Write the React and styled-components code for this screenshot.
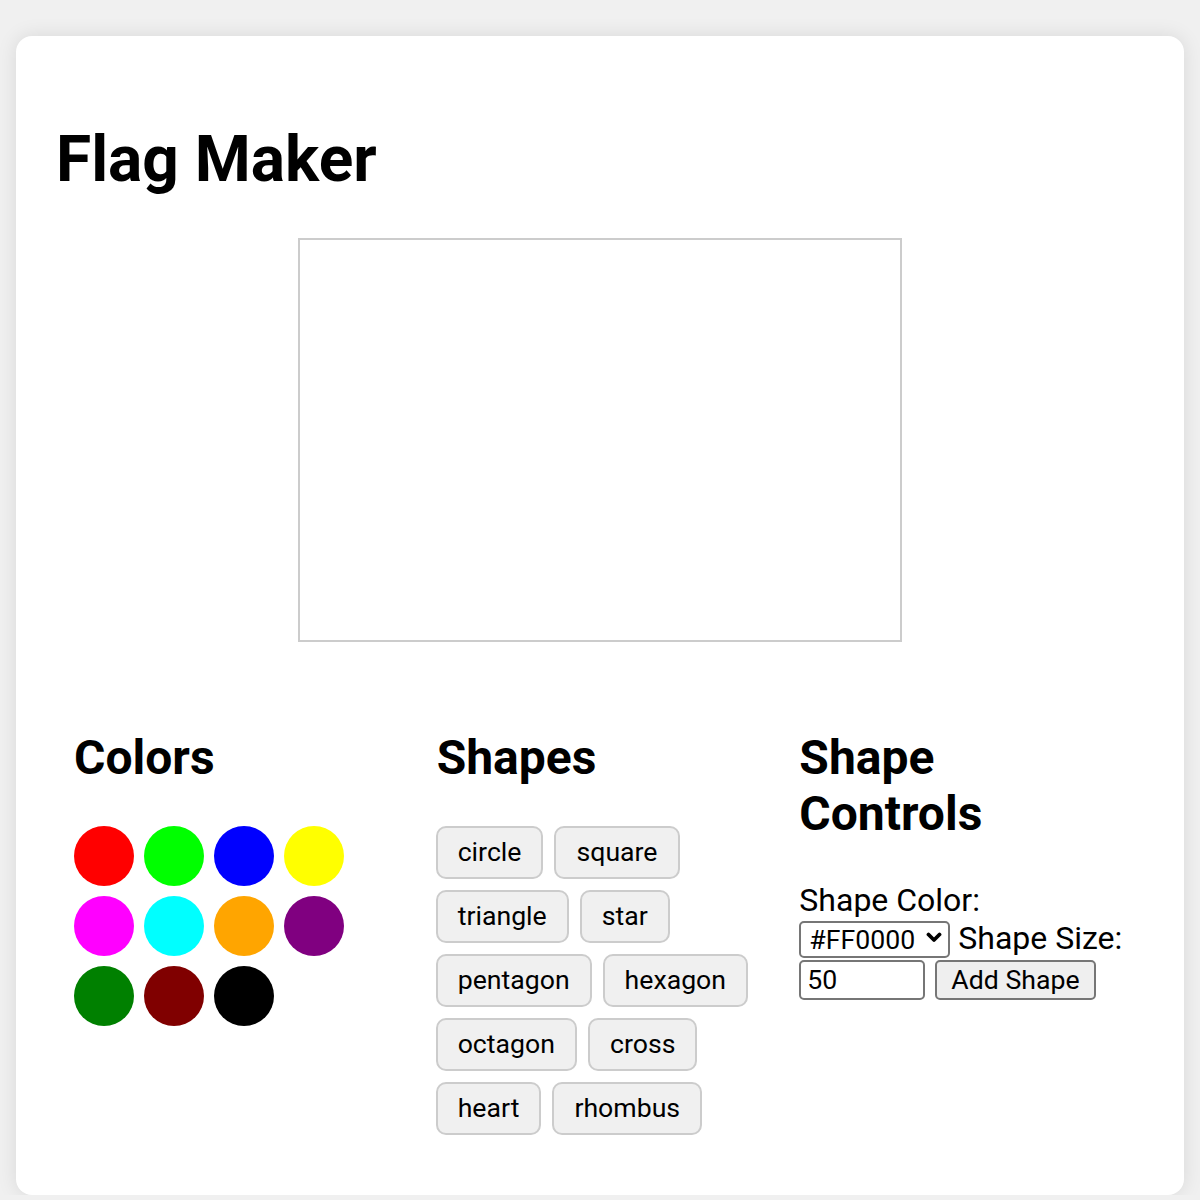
import React, { useState } from 'react';
import styled, { createGlobalStyle } from 'styled-components';

const COLORS = [
  '#FF0000', '#00FF00', '#0000FF', '#FFFF00',
  '#FF00FF', '#00FFFF', '#FFA500', '#800080',
  '#008000', '#800000', '#000000',
];

const SHAPES = [
  'circle', 'square', 'triangle', 'star', 'pentagon',
  'hexagon', 'octagon', 'cross', 'heart', 'rhombus',
];

const GlobalStyle = createGlobalStyle`
  body {
    margin: 0;
    background: #f0f0f0;
    font-family: Roboto, "Liberation Sans", sans-serif;
    color: #000;
  }
`;

const Page = styled.div`
  padding: 36px 16px 0;
`;

const Card = styled.div`
  background: #fff;
  border-radius: 16px;
  box-shadow: 0 0 20px rgba(0, 0, 0, 0.1);
  padding: 40px;
`;

const Title = styled.h1`
  font-size: 64px;
  font-weight: 700;
  margin: 46px 0 41px;
`;

const Canvas = styled.div`
  width: 600px;
  height: 400px;
  margin: 0 auto;
  border: 2px solid #ccc;
  background: #fff;
`;

const Controls = styled.div`
  display: flex;
  margin-top: 28px;
`;

const Column = styled.div`
  flex: 1;
  min-width: 0;
  padding: 20px 18px;
`;

const Heading = styled.h2`
  font-size: 48px;
  font-weight: 700;
  line-height: 56px;
  margin: 40px 0;
`;

const Swatches = styled.div`
  display: flex;
  flex-wrap: wrap;
  gap: 10px;
`;

const Swatch = styled.div`
  width: 60px;
  height: 60px;
  border-radius: 50%;
  background: ${(p) => p.$color};
  cursor: pointer;
`;

const ShapeList = styled.div`
  display: flex;
  flex-wrap: wrap;
  gap: 11px;
  margin-left: -1px;
`;

const ShapeButton = styled.button`
  font-family: Roboto, "Liberation Sans", sans-serif;
  font-size: 26.67px;
  line-height: 31px;
  padding: 9px 20px;
  border: 2px solid #ccc;
  border-radius: 10px;
  background: #f0f0f0;
  color: #000;
  cursor: pointer;
`;

const Form = styled.div`
  font-size: 32px;
  line-height: 37.5px;
`;

const SelectWrap = styled.span`
  position: relative;
  display: inline-block;
  vertical-align: baseline;
`;

const Select = styled.select`
  appearance: none;
  -webkit-appearance: none;
  font-family: Roboto, "Liberation Sans", sans-serif;
  font-size: 26.67px;
  height: 37px;
  width: 151px;
  padding: 0 30px 0 8px;
  border: 2px solid #767676;
  border-radius: 5px;
  background: #fff;
  color: #000;
`;

const Chevron = styled.svg`
  position: absolute;
  right: 8px;
  top: 12px;
  z-index: 1;
  pointer-events: none;
`;

const SizeInput = styled.input`
  font-family: Roboto, "Liberation Sans", sans-serif;
  font-size: 26.67px;
  width: 126px;
  height: 40px;
  box-sizing: border-box;
  margin-top: 2px;
  padding: 2px 6px;
  border: 2px solid #767676;
  border-radius: 5px;
  color: #000;
`;

const AddButton = styled.button`
  font-family: Roboto, "Liberation Sans", sans-serif;
  font-size: 26.67px;
  height: 40px;
  padding: 0 14px;
  margin-left: 10px;
  border: 2px solid #767676;
  border-radius: 5px;
  background: #efefef;
  color: #000;
`;

export default function App() {
  const [color, setColor] = useState('#FF0000');
  const [size, setSize] = useState('50');

  return (
    <Page>
      <GlobalStyle />
      <Card>
        <Title>Flag Maker</Title>
        <Canvas />
        <Controls>
          <Column>
            <Heading>Colors</Heading>
            <Swatches>
              {COLORS.map((c) => (
                <Swatch key={c} $color={c} onClick={() => setColor(c)} />
              ))}
            </Swatches>
          </Column>
          <Column>
            <Heading>Shapes</Heading>
            <ShapeList>
              {SHAPES.map((s) => (
                <ShapeButton key={s}>{s}</ShapeButton>
              ))}
            </ShapeList>
          </Column>
          <Column>
            <Heading>Shape Controls</Heading>
            <Form>
              <label>Shape Color: </label>
              <SelectWrap>
                <Select value={color} onChange={(e) => setColor(e.target.value)}>
                  {COLORS.map((c) => (
                    <option key={c} value={c}>{c}</option>
                  ))}
                </Select>
                <Chevron width="16" height="11" viewBox="0 0 16 11">
                  <path
                    d="M2.5 2.5 L8 8 L13.5 2.5"
                    fill="none"
                    stroke="#000"
                    strokeWidth="3.8"
                    strokeLinecap="round"
                    strokeLinejoin="round"
                  />
                </Chevron>
              </SelectWrap>
              <label> Shape Size: </label>
              <SizeInput value={size} onChange={(e) => setSize(e.target.value)} />
              <AddButton>Add Shape</AddButton>
            </Form>
          </Column>
        </Controls>
      </Card>
    </Page>
  );
}
